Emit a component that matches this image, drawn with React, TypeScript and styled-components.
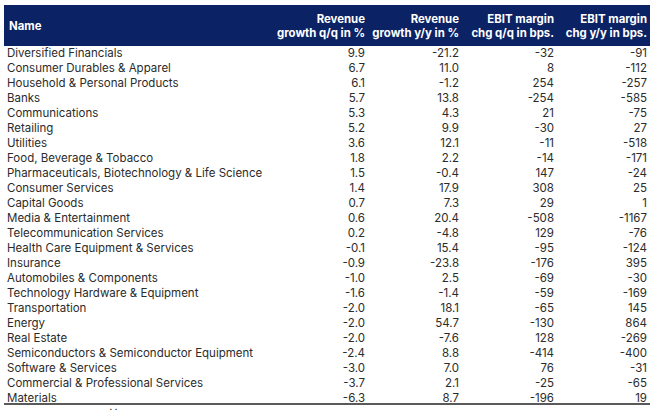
import React from 'react';
import styled, { createGlobalStyle } from 'styled-components';

const GlobalStyle = createGlobalStyle`
  html, body {
    margin: 0;
    padding: 0;
    background: #fff;
  }
  body {
    font-family: Inter, 'Liberation Sans', Arial, sans-serif;
    color: #2b2b2b;
  }
`;

const COLS = '269px 95px 94px 95px 93px';

const Page = styled.div`
  width: 660px;
  height: 410px;
  overflow: hidden;
  padding: 5px 0 0 4px;
  box-sizing: border-box;
`;

const Table = styled.div`
  width: 646px;
  border-bottom: 2px solid #5a5a5a;
`;

const HeadRow = styled.div`
  display: grid;
  grid-template-columns: ${COLS};
  height: 41px;
  background: #0b2264;
  color: #fff;
  font-weight: 700;
  font-size: 11.4px;
  line-height: 14px;
`;

const HeadCell = styled.div<{ $left?: boolean }>`
  display: flex;
  flex-direction: column;
  justify-content: center;
  align-items: ${(p) => (p.$left ? 'flex-start' : 'flex-end')};
  padding: ${(p) => (p.$left ? '0 0 0 5px' : '0 3px 0 0')};
  text-align: ${(p) => (p.$left ? 'left' : 'right')};
  white-space: nowrap;
`;

const Row = styled.div`
  display: grid;
  grid-template-columns: ${COLS};
  height: 15px;
  font-size: 11.5px;
  line-height: 15px;

  &:last-child {
    height: 12px;
  }
`;

const Cell = styled.div<{ $left?: boolean }>`
  padding: ${(p) => (p.$left ? '0 0 0 3px' : '0 3px 0 0')};
  text-align: ${(p) => (p.$left ? 'left' : 'right')};
  white-space: nowrap;
`;

const Footer = styled.div`
  font-size: 11px;
  line-height: 14px;
  padding: 2px 0 0 3px;
  color: #2b2b2b;
`;

const rows: [string, string, string, string, string][] = [
  ['Diversified Financials', '9.9', '-21.2', '-32', '-91'],
  ['Consumer Durables & Apparel', '6.7', '11.0', '8', '-112'],
  ['Household & Personal Products', '6.1', '-1.2', '254', '-257'],
  ['Banks', '5.7', '13.8', '-254', '-585'],
  ['Communications', '5.3', '4.3', '21', '-75'],
  ['Retailing', '5.2', '9.9', '-30', '27'],
  ['Utilities', '3.6', '12.1', '-11', '-518'],
  ['Food, Beverage & Tobacco', '1.8', '2.2', '-14', '-171'],
  ['Pharmaceuticals, Biotechnology & Life Science', '1.5', '-0.4', '147', '-24'],
  ['Consumer Services', '1.4', '17.9', '308', '25'],
  ['Capital Goods', '0.7', '7.3', '29', '1'],
  ['Media & Entertainment', '0.6', '20.4', '-508', '-1167'],
  ['Telecommunication Services', '0.2', '-4.8', '129', '-76'],
  ['Health Care Equipment & Services', '-0.1', '15.4', '-95', '-124'],
  ['Insurance', '-0.9', '-23.8', '-176', '395'],
  ['Automobiles & Components', '-1.0', '2.5', '-69', '-30'],
  ['Technology Hardware & Equipment', '-1.6', '-1.4', '-59', '-169'],
  ['Transportation', '-2.0', '18.1', '-65', '145'],
  ['Energy', '-2.0', '54.7', '-130', '864'],
  ['Real Estate', '-2.0', '-7.6', '128', '-269'],
  ['Semiconductors & Semiconductor Equipment', '-2.4', '8.8', '-414', '-400'],
  ['Software & Services', '-3.0', '7.0', '76', '-31'],
  ['Commercial & Professional Services', '-3.7', '2.1', '-25', '-65'],
  ['Materials', '-6.3', '8.7', '-196', '19'],
];

const headers: [string, string][] = [
  ['Revenue', 'growth q/q in %'],
  ['Revenue', 'growth y/y in %'],
  ['EBIT margin', 'chg q/q in bps.'],
  ['EBIT margin', 'chg y/y in bps.'],
];

const App = () => {
  return (
    <Page>
      <GlobalStyle />
      <Table>
        <HeadRow>
          <HeadCell $left>Name</HeadCell>
          {headers.map(([a, b]) => (
            <HeadCell key={b}>
              <span>{a}</span>
              <span>{b}</span>
            </HeadCell>
          ))}
        </HeadRow>
        {rows.map((r) => (
          <Row key={r[0]}>
            <Cell $left>{r[0]}</Cell>
            <Cell>{r[1]}</Cell>
            <Cell>{r[2]}</Cell>
            <Cell>{r[3]}</Cell>
            <Cell>{r[4]}</Cell>
          </Row>
        ))}
      </Table>
      <Footer>Source: Company Filings</Footer>
    </Page>
  );
};

export default App;
